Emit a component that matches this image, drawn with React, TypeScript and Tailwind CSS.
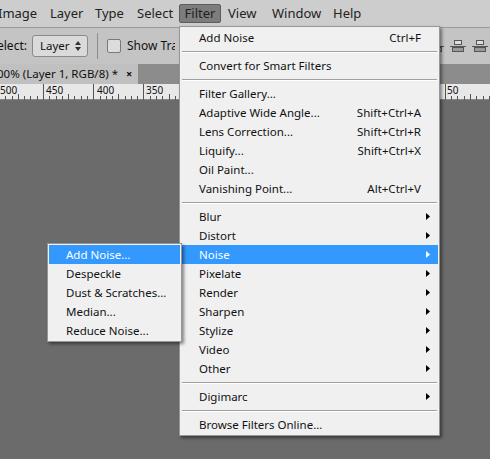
import React from "react";

const font = { fontFamily: '"Segoe UI", "Noto Sans", "Open Sans", sans-serif' };

type Item =
  | { sep: true }
  | { label: string; shortcut?: string; sub?: boolean; active?: boolean };

const items: Item[] = [
  { label: "Add Noise", shortcut: "Ctrl+F" },
  { sep: true },
  { label: "Convert for Smart Filters" },
  { sep: true },
  { label: "Filter Gallery..." },
  { label: "Adaptive Wide Angle...", shortcut: "Shift+Ctrl+A" },
  { label: "Lens Correction...", shortcut: "Shift+Ctrl+R" },
  { label: "Liquify...", shortcut: "Shift+Ctrl+X" },
  { label: "Oil Paint..." },
  { label: "Vanishing Point...", shortcut: "Alt+Ctrl+V" },
  { sep: true },
  { label: "Blur", sub: true },
  { label: "Distort", sub: true },
  { label: "Noise", sub: true, active: true },
  { label: "Pixelate", sub: true },
  { label: "Render", sub: true },
  { label: "Sharpen", sub: true },
  { label: "Stylize", sub: true },
  { label: "Video", sub: true },
  { label: "Other", sub: true },
  { sep: true },
  { label: "Digimarc", sub: true },
  { sep: true },
  { label: "Browse Filters Online..." },
];

const subItems = ["Add Noise...", "Despeckle", "Dust & Scratches...", "Median...", "Reduce Noise..."];

function Arrow({ white }: { white?: boolean }) {
  return (
    <svg width="4" height="7" viewBox="0 0 4 7" className="block">
      <path d="M0 0 L4 3.5 L0 7 Z" fill={white ? "#ffffff" : "#000000"} />
    </svg>
  );
}

function Ruler() {
  const ticks: React.ReactNode[] = [];
  for (let i = -8; i < 90; i++) {
    const x = 43 + i * 6.28;
    if (x < 0 || x > 490) continue;
    const major = i % 8 === 0;
    const mid = i % 4 === 0;
    ticks.push(
      <line
        key={i}
        x1={Math.round(x) + 0.5}
        x2={Math.round(x) + 0.5}
        y1={major ? 0 : mid ? 10 : 12}
        y2={16}
        stroke="#555"
        strokeWidth="1"
      />
    );
  }
  return (
    <svg width="490" height="16" className="absolute left-0 top-0">
      {ticks}
    </svg>
  );
}

export default function App() {
  return (
    <div className="relative w-[490px] h-[459px] overflow-hidden bg-[#6b6b6b] text-[11.5px] text-[#111]" style={font}>
      {/* Menu bar */}
      <div className="h-[28px] bg-[#cdcdcd] border-b border-[#9a9a9a] flex items-center text-[13px] text-[#222] whitespace-nowrap">
        <span className="ml-[-2px] w-[52px]">Image</span>
        <span className="w-[45px]">Layer</span>
        <span className="w-[42px]">Type</span>
        <span className="w-[42px]">Select</span>
        <span className="w-[42px] h-[19px] bg-[#7d7d7d] border border-[#5c5c5c] rounded-[2px] flex items-center justify-center">Filter</span>
        <span className="ml-[7px] w-[44px]">View</span>
        <span className="w-[61px]">Window</span>
        <span>Help</span>
      </div>
      {/* Options bar */}
      <div className="h-[36px] bg-[#c4c4c4] flex items-center whitespace-nowrap text-[12px]">
        <span className="ml-[-3px]">elect:</span>
        <div className="ml-[5px] w-[56px] h-[22px] rounded-[3px] border border-[#8a8a8a] bg-[#dadada] flex items-center pl-[7px] pr-[5px] gap-[5px]">
          <span className="text-[11.5px]">Layer</span>
          <svg width="6" height="10" viewBox="0 0 6 10">
            <path d="M3 0 L6 4 L0 4 Z M0 6 L6 6 L3 10 Z" fill="#333" />
          </svg>
        </div>
        <div className="ml-[9px] w-px h-[26px] bg-[#8d8d8d]" />
        <div className="ml-[9px] w-[14px] h-[14px] rounded-[2px] border border-[#7a7a7a] bg-[#dcdcdc]" />
        <span className="ml-[6px] w-[48px] overflow-hidden">Show Tran</span>
        <div className="ml-auto flex gap-[6px] pr-[2px]">
          {[0, 1, 2].map((i) => (
            <svg key={i} width="16" height="12" viewBox="0 0 16 12">
              <line x1="0" y1="6.5" x2="16" y2="6.5" stroke="#555" />
              <rect x="4.5" y="0.5" width="7" height="4" fill="#ddd" stroke="#555" />
              <rect x="2.5" y="7.5" width="11" height="4" fill="#999" stroke="#555" />
            </svg>
          ))}
        </div>
      </div>
      {/* Tab bar */}
      <div className="h-[20px] bg-[#8c8c8c] flex">
        <div className="w-[138px] h-full bg-[#c0c0c0] flex items-center text-[11.5px] whitespace-nowrap overflow-hidden">
          <span className="ml-[-3px]">00% (Layer 1, RGB/8) *</span>
          <span className="ml-[8px] text-[11px] font-bold">×</span>
        </div>
      </div>
      {/* Ruler */}
      <div className="relative h-[16px] bg-[#e8e8e8] border-b border-[#8a8a8a] text-[10px] leading-none">
        <Ruler />
        <span className="absolute left-[0px] top-[1px] bg-[#e8e8e8] pr-[1px]">500</span>
        <span className="absolute left-[46px] top-[1px] bg-[#e8e8e8] pr-[1px]">450</span>
        <span className="absolute left-[97px] top-[1px] bg-[#e8e8e8] pr-[1px]">400</span>
        <span className="absolute left-[146px] top-[1px] bg-[#e8e8e8] pr-[1px]">350</span>
        <span className="absolute left-[447px] top-[1px] bg-[#e8e8e8] pr-[1px]">50</span>
      </div>

      {/* Filter dropdown */}
      <div className="absolute left-[179px] top-[26px] w-[261px] bg-[#f0f0f0] border border-[#979797] py-[1px] shadow-[2px_2px_3px_rgba(0,0,0,0.45)] whitespace-nowrap">
        {items.map((it, i) =>
          "sep" in it ? (
            <div key={i} className="h-[9px] flex items-center px-[2px]">
              <div className="w-full h-[2px] border-t border-[#a0a0a0] border-b border-b-white" />
            </div>
          ) : (
            <div
              key={i}
              className={`h-[19px] mx-[1px] flex items-center pl-[18px] pr-[8px] ${it.active ? "bg-[#3399ff] text-white" : ""}`}
            >
              <span className="flex-1">{it.label}</span>
              {it.shortcut && <span className="mr-[9px]">{it.shortcut}</span>}
              {it.sub && <Arrow white={it.active} />}
            </div>
          )
        )}
      </div>

      {/* Noise submenu */}
      <div className="absolute left-[47px] top-[243px] w-[135px] bg-[#f0f0f0] border border-[#979797] py-[1px] shadow-[2px_2px_3px_rgba(0,0,0,0.45)] whitespace-nowrap">
        {subItems.map((s, i) => (
          <div key={s} className={`h-[19px] mx-[1px] flex items-center pl-[17px] ${i === 0 ? "bg-[#3399ff] text-white" : ""}`}>
            {s}
          </div>
        ))}
      </div>
    </div>
  );
}
